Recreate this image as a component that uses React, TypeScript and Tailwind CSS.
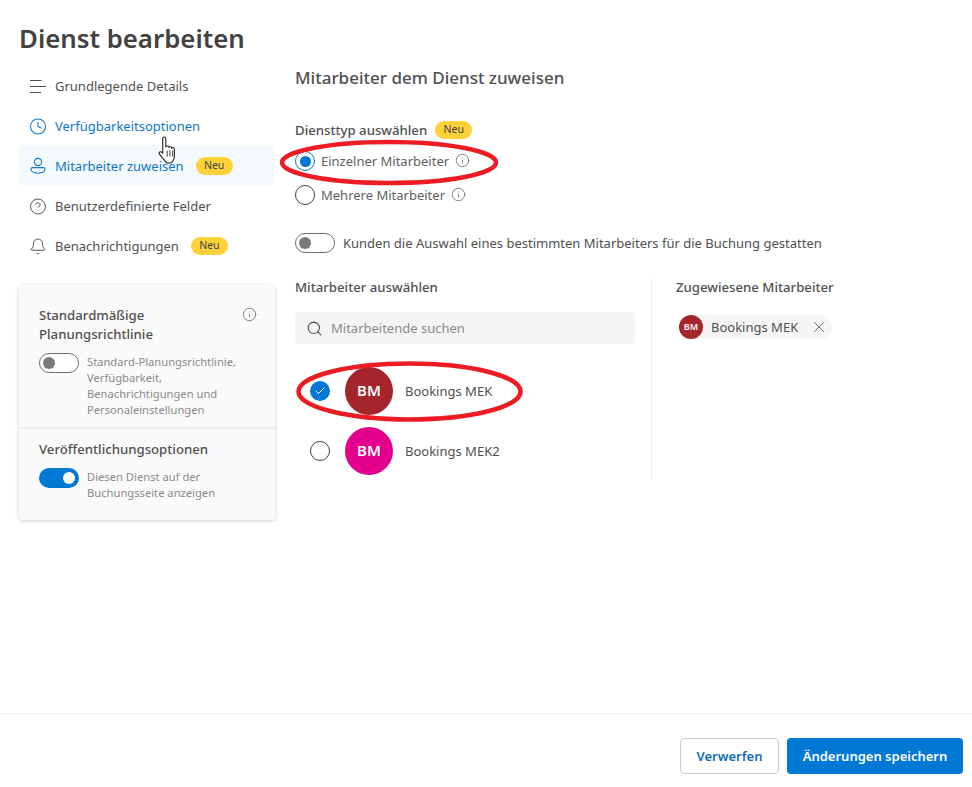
import { Bell, CircleHelp, Clock, Info, Search, X, Check } from 'lucide-react';

const FONT = "font-['Noto_Sans','Open_Sans',sans-serif]";

function NewBadge() {
  return (
    <span className="inline-flex h-[18px] w-[37px] items-center justify-center rounded-full bg-[#fdd13a] text-[10.5px] text-[#424242]">
      Neu
    </span>
  );
}

function Toggle({ on = false }: { on?: boolean }) {
  if (on) {
    return (
      <span className="flex h-5 w-10 shrink-0 items-center justify-end rounded-full bg-[#0078d4] px-1">
        <span className="h-3 w-3 rounded-full bg-white" />
      </span>
    );
  }
  return (
    <span className="flex h-5 w-10 shrink-0 items-center rounded-full border border-[#6f6f6f] bg-white px-[3px]">
      <span className="h-3 w-3 rounded-full bg-[#7a7a7a]" />
    </span>
  );
}

function PersonIcon() {
  return (
    <svg width="18" height="18" viewBox="0 0 18 18" fill="none" stroke="currentColor" strokeWidth="1.1">
      <circle cx="9" cy="5" r="3.6" />
      <path d="M3.6 10.6h10.8c.9 0 1.6.7 1.6 1.5 0 2.6-3.1 4.1-7 4.1s-7-1.5-7-4.1c0-.8.7-1.5 1.6-1.5z" />
    </svg>
  );
}

function LinesIcon() {
  return (
    <svg width="18" height="18" viewBox="0 0 18 18" fill="none" stroke="currentColor" strokeWidth="1">
      <path d="M1 3.5h11.5M1 9.5h16M1 15.5h11" />
    </svg>
  );
}

function NavItem({
  icon,
  label,
  active,
  selected,
  badge,
}: {
  icon: React.ReactNode;
  label: string;
  active?: boolean;
  selected?: boolean;
  badge?: boolean;
}) {
  return (
    <div
      className={`flex h-10 items-center rounded-sm pl-[10px] text-[13px] ${
        selected ? '-mt-px mb-px bg-[#f3f9fd] pt-[2px]' : ''
      } ${active ? 'text-[#0f78c9]' : 'text-[#505050]'}`}
    >
      <span className="flex w-[18px] justify-center">{icon}</span>
      <span className="ml-[8px] whitespace-nowrap pt-[2px]">{label}</span>
      {badge && (
        <span className="ml-[12px] flex">
          <NewBadge />
        </span>
      )}
    </div>
  );
}

function Radio({ checked }: { checked?: boolean }) {
  return (
    <span
      className={`flex h-5 w-5 shrink-0 items-center justify-center rounded-full border ${
        checked ? 'border-[#0078d4]' : 'border-[#424242]'
      }`}
    >
      {checked && <span className="h-[11px] w-[11px] rounded-full bg-[#0078d4]" />}
    </span>
  );
}

function StaffRow({ name, color, checked }: { name: string; color: string; checked?: boolean }) {
  return (
    <div className="flex h-12 items-center pl-[15px]">
      {checked ? (
        <span className="flex h-5 w-5 items-center justify-center rounded-full bg-[#0078d4]">
          <Check className="h-3 w-3 text-white" strokeWidth={2} />
        </span>
      ) : (
        <Radio />
      )}
      <span className={`ml-[15px] flex h-12 w-12 items-center justify-center rounded-full pb-[2px] text-[15px] font-semibold text-white ${color}`}>
        BM
      </span>
      <span className="ml-3 pt-[2px] text-[13px] text-[#505050]">{name}</span>
    </div>
  );
}

export default function App() {
  return (
    <div className={`relative flex h-[787px] w-[972px] flex-col overflow-hidden bg-white ${FONT}`}>
      <h1 className="h-[66px] pl-[19px] pt-[18px] text-[25.8px] leading-[40px] font-semibold text-[#424242]">
        Dienst bearbeiten
      </h1>

      <div className="flex flex-1 pl-[19px]">
        {/* Sidebar */}
        <aside className="w-[256px] shrink-0">
          <nav>
            <NavItem icon={<LinesIcon />} label="Grundlegende Details" />
            <NavItem active icon={<Clock className="h-[19px] w-[19px]" strokeWidth={1.4} />} label="Verfügbarkeitsoptionen" />
            <NavItem active selected badge icon={<PersonIcon />} label="Mitarbeiter zuweisen" />
            <NavItem icon={<CircleHelp className="h-[19px] w-[19px]" strokeWidth={1.3} />} label="Benutzerdefinierte Felder" />
            <NavItem badge icon={<Bell className="h-[19px] w-[19px]" strokeWidth={1.3} />} label="Benachrichtigungen" />
          </nav>

          <div className="mt-[19px] h-[235px] rounded-sm bg-[#fafafa] shadow-[0_1px_4px_rgba(0,0,0,0.2)]">
            <div className="h-[144px] border-b-2 border-[#f0f0f0] px-5 pt-[21px]">
              <div className="flex justify-between">
                <div className="text-[13.2px] leading-[19px] font-medium text-[#505050]">
                  Standardmäßige
                  <br />
                  Planungsrichtlinie
                </div>
                <Info className="-mr-[2px] mt-px h-[15px] w-[15px] text-[#7a7a7a]" strokeWidth={1.5} />
              </div>
              <div className="mt-[9px] flex gap-2">
                <Toggle />
                <p className="pt-px text-[11.2px] leading-4 text-[#8a8a8a]">
                  Standard-Planungsrichtlinie,
                  <br />
                  Verfügbarkeit,
                  <br />
                  Benachrichtigungen und
                  <br />
                  Personaleinstellungen
                </p>
              </div>
            </div>
            <div className="px-5 pt-[11px]">
              <div className="text-[13.2px] leading-[19px] font-medium text-[#505050]">Veröffentlichungsoptionen</div>
              <div className="mt-[9px] flex gap-2">
                <Toggle on />
                <p className="pt-px text-[11.2px] leading-4 text-[#8a8a8a]">
                  Diesen Dienst auf der
                  <br />
                  Buchungsseite anzeigen
                </p>
              </div>
            </div>
          </div>
        </aside>

        {/* Main */}
        <main className="ml-5 flex-1">
          <h2 className="text-[17px] leading-6 font-medium text-[#505050]">Mitarbeiter dem Dienst zuweisen</h2>

          <div className="mt-[31px] flex h-[18px] items-center">
            <span className="pt-[2px] text-[13.2px] font-medium text-[#505050]">Diensttyp auswählen</span>
            <span className="ml-2 flex">
              <NewBadge />
            </span>
          </div>

          <div className="mt-[12px] flex h-5 items-center text-[13px] text-[#616161]">
            <Radio checked />
            <span className="ml-[6px] pt-[2px]">Einzelner Mitarbeiter</span>
            <Info className="-mt-[2px] ml-[6px] h-[15px] w-[15px] text-[#7a7a7a]" strokeWidth={1.5} />
          </div>
          <div className="mt-[14px] flex h-5 items-center text-[13px] text-[#616161]">
            <Radio />
            <span className="ml-[6px] pt-[2px]">Mehrere Mitarbeiter</span>
            <Info className="-mt-[2px] ml-[6px] h-[15px] w-[15px] text-[#7a7a7a]" strokeWidth={1.5} />
          </div>

          <div className="mt-[28px] flex h-5 items-center gap-2">
            <Toggle />
            <span className="whitespace-nowrap pt-[2px] text-[13px] text-[#505050]">
              Kunden die Auswahl eines bestimmten Mitarbeiters für die Buchung gestatten
            </span>
          </div>

          <div className="mt-[25px] flex h-[202px]">
            <section className="w-[340px]">
              <h3 className="text-[13.2px] leading-[19px] font-medium text-[#505050]">Mitarbeiter auswählen</h3>
              <div className="mt-[15px] flex h-8 items-center rounded-sm bg-[#f5f5f5] pl-[11px] text-[13px] text-[#8a8a8a]">
                <Search className="h-[17px] w-[17px] text-[#505050]" strokeWidth={1.5} />
                <span className="ml-[8px] pt-[2px]">Mitarbeitende suchen</span>
              </div>
              <div className="mt-[23px] flex flex-col gap-3">
                <StaffRow name="Bookings MEK" color="bg-[#a4262c]" checked />
                <StaffRow name="Bookings MEK2" color="bg-[#e3008c]" />
              </div>
            </section>
            <div className="ml-4 w-px bg-[#eeeeee]" />
            <section className="ml-6">
              <h3 className="text-[13.2px] leading-[19px] font-medium text-[#505050]">Zugewiesene Mitarbeiter</h3>
              <div className="mt-[18px] ml-[3px] flex h-6 w-[153px] items-center rounded-full bg-[#f5f5f5]">
                <span className="flex h-6 w-6 items-center justify-center rounded-full bg-[#a4262c] text-[9px] font-semibold text-white">
                  BM
                </span>
                <span className="ml-2 pt-[2px] text-[13px] text-[#505050]">Bookings MEK</span>
                <X className="ml-auto mr-[4px] h-[18px] w-[18px] text-[#707070]" strokeWidth={1.3} />
              </div>
            </section>
          </div>
        </main>
      </div>

      <footer className="flex h-[74px] shrink-0 items-start justify-end gap-2 border-t border-[#eeeeee] pr-[9px] pt-6">
        <button className="h-9 w-[99px] rounded-sm border border-[#c8c8c8] bg-white pt-[2px] text-[13px] font-semibold text-[#0f6cbd]">
          Verwerfen
        </button>
        <button className="h-9 w-[176px] rounded-sm bg-[#0078d4] pt-[2px] text-[13px] font-semibold text-white">
          Änderungen speichern
        </button>
      </footer>

      {/* Annotations drawn over the screenshot */}
      <svg className="pointer-events-none absolute left-0 top-0" width="972" height="787" fill="none">
        <ellipse cx="389" cy="162.5" rx="107" ry="20.5" stroke="#ed1c24" strokeWidth="4.5" />
        <ellipse cx="409.5" cy="391.5" rx="111" ry="28" stroke="#ed1c24" strokeWidth="4.5" />
      </svg>

      {/* Mouse cursor */}
      <svg className="pointer-events-none absolute left-[158px] top-[135px]" width="24" height="30" viewBox="0 0 20 25">
        <path
          d="M5.2 1.6c.8 0 1.3.6 1.3 1.4v7.2c0-.7.5-1.1 1.2-1.1s1.2.5 1.2 1.2v.4c0-.7.5-1.1 1.2-1.1s1.2.5 1.2 1.2v.6c0-.6.5-1 1.1-1 .7 0 1.2.5 1.2 1.2l.1 5.2c0 3-1.6 5.6-3.3 6.6H7.6c-1-.8-2.3-2.2-3.4-3.7l-3-3.7c-.5-.7-.3-1.4.2-1.8.6-.4 1.3-.3 1.8.2L3.9 15V3c0-.8.5-1.4 1.3-1.4z"
          fill="#fff"
          stroke="#222"
          strokeWidth="0.9"
        />
        <path d="M7.7 13v5M9.9 13v5M12.2 13v5" stroke="#222" strokeWidth="0.7" />
      </svg>
    </div>
  );
}
